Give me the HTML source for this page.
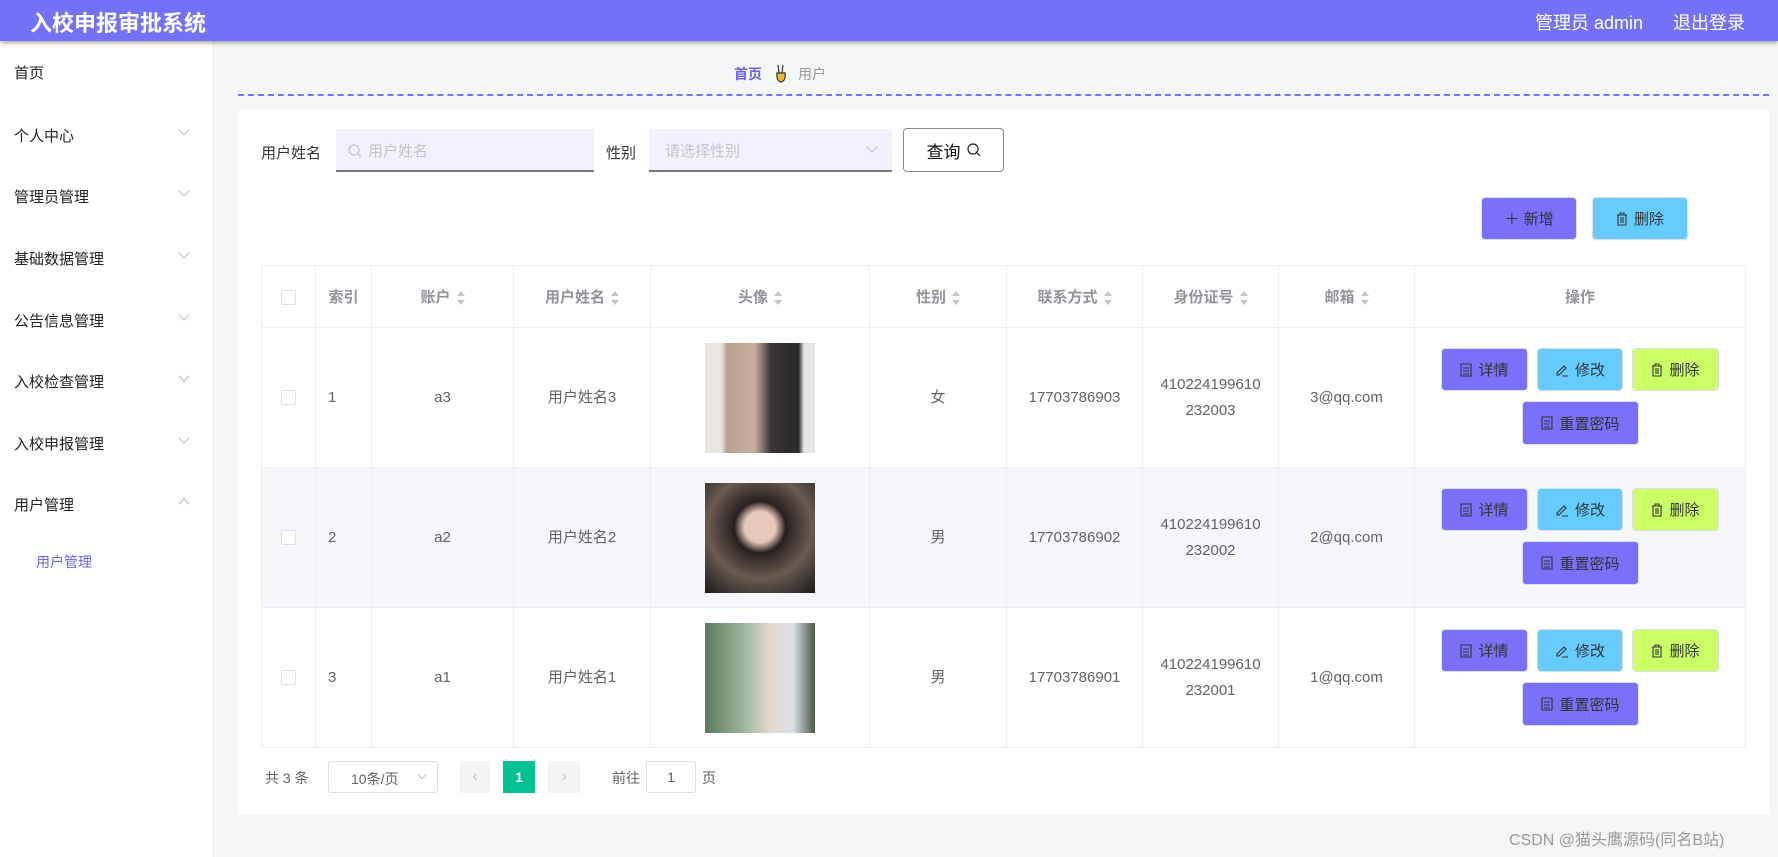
<!DOCTYPE html>
<html><head><meta charset="utf-8">
<style>
*{box-sizing:border-box;margin:0;padding:0}
body{width:1778px;height:857px;overflow:hidden;background:#f5f6f8;font-family:"Liberation Sans","Noto Sans CJK SC",sans-serif;position:relative;color:#333}
.abs{position:absolute}
.hdr{left:0;top:0;width:1778px;height:41px;background:#7471f9;box-shadow:0 2px 4px rgba(0,0,0,.35);z-index:2}
.side{left:0;top:41px;width:212px;height:816px;background:#fff}
.mi{position:absolute;left:14px;font-size:15px;color:#222}
.arr{position:absolute;left:180px;width:8px;height:8px;border-right:1px solid #bbb;border-bottom:1px solid #bbb;transform:rotate(45deg)}
.panel{left:238px;top:110px;width:1531px;height:704px;background:#fff}
.inp{background:#f3f1ff;border-bottom:2px solid #777;height:43px}
.btn{position:absolute;border-radius:4px;font-size:15px;display:flex;align-items:center;justify-content:center;gap:6px;color:#333;border:1px solid #dcdfe6}
.p{background:#7a70fa}.b{background:#66ccff}.g{background:#ccff66}
table{border-collapse:collapse;position:absolute;left:261px;top:265px;width:1484px;table-layout:fixed;font-size:15px;color:#606266}
td,th{border:1px solid #ebeef5;text-align:center}
th{height:62px;color:#909399;font-weight:bold}
td{height:140px;line-height:26px}
tr.alt td{background:#f5f7fa}
.s{display:inline-block;vertical-align:middle;margin-left:6px;width:8px;height:14px;position:relative}
.s:before,.s:after{content:"";position:absolute;left:0;border-left:4px solid transparent;border-right:4px solid transparent}
.s:before{top:0;border-bottom:5px solid #c0c4cc}.s:after{bottom:0;border-top:5px solid #c0c4cc}
.cb{display:inline-block;width:15px;height:15px;border:1px solid #dcdfe6;border-radius:2px;background:#fff;vertical-align:middle}
.img{width:110px;height:110px;margin:0 auto}
.pg{font-size:14px;color:#606266}
svg{display:block}
</style></head><body>
<div class="abs hdr">
<div class="abs" style="left:30px;top:6px;font-size:22px;font-weight:bold;color:#fff">入校申报审批系统</div>
<div class="abs" style="left:1535px;top:9px;font-size:18px;color:#fff">管理员 admin</div>
<div class="abs" style="left:1673px;top:9px;font-size:18px;color:#fff">退出登录</div>
</div>
<div class="abs side">
<div class="mi" style="top:21px">首页</div>
<div class="mi" style="top:84px">个人中心</div><div class="arr" style="top:85px"></div>
<div class="mi" style="top:145px">管理员管理</div><div class="arr" style="top:146px"></div>
<div class="mi" style="top:207px">基础数据管理</div><div class="arr" style="top:208px"></div>
<div class="mi" style="top:269px">公告信息管理</div><div class="arr" style="top:270px"></div>
<div class="mi" style="top:330px">入校检查管理</div><div class="arr" style="top:331px"></div>
<div class="mi" style="top:392px">入校申报管理</div><div class="arr" style="top:393px"></div>
<div class="mi" style="top:453px">用户管理</div><div class="arr" style="top:459px;transform:rotate(-135deg)"></div>
<div class="mi" style="top:511px;left:36px;color:#6b63f0;font-size:14px">用户管理</div>
</div>
<div class="abs" style="left:734px;top:64px;font-size:14px;color:#6b63f0;font-weight:bold">首页</div>
<div class="abs" style="left:774px;top:63px"><svg width="14" height="20" viewBox="0 0 14 20"><path d="M4 2 L5 10 M9 2 L8 10 M3 10 Q2 18 7 19 Q12 18 11 10 Z" fill="#f5b82e" stroke="#333" stroke-width="1.2"/></svg></div>
<div class="abs" style="left:798px;top:64px;font-size:14px;color:#999">用户</div>
<div class="abs" style="left:238px;top:94px;width:1531px;border-top:2px dashed #7471f9"></div>
<div class="abs panel"></div>
<div class="abs" style="left:261px;top:142px;font-size:15px">用户姓名</div>
<div class="abs inp" style="left:336px;top:129px;width:258px"><svg style="position:absolute;left:12px;top:15px" width="14" height="14" viewBox="0 0 14 14"><circle cx="6" cy="6" r="5" fill="none" stroke="#c0c4cc" stroke-width="1.3"/><path d="M10 10 L13 13" stroke="#c0c4cc" stroke-width="1.3"/></svg><span style="position:absolute;left:32px;top:11px;color:#c0c4cc;font-size:15px">用户姓名</span></div>
<div class="abs" style="left:606px;top:142px;font-size:15px">性别</div>
<div class="abs inp" style="left:649px;top:129px;width:243px"><span style="position:absolute;left:16px;top:11px;color:#c0c4cc;font-size:15px">请选择性别</span><span style="position:absolute;right:16px;top:14px;width:8px;height:8px;border-right:1px solid #bbb;border-bottom:1px solid #bbb;transform:rotate(45deg)"></span></div>
<div class="btn" style="left:903px;top:128px;width:101px;height:44px;border:1px solid #888;font-size:17px;color:#111;background:#fff">查询 <svg width="14" height="14" viewBox="0 0 14 14"><circle cx="6" cy="6" r="5" fill="none" stroke="#222" stroke-width="1.2"/><path d="M10 10 L13 13" stroke="#222" stroke-width="1.2"/></svg></div>
<div class="btn p" style="left:1481px;top:197px;width:96px;height:43px">＋ 新增</div>
<div class="btn b" style="left:1592px;top:197px;width:96px;height:43px"><svg width="12" height="14" viewBox="0 0 12 14"><path d="M1 3 H11 M4 3 V1 H8 V3 M2 3 V13 H10 V3 M5 5 V11 M7 5 V11" fill="none" stroke="#333" stroke-width="1.1"/></svg>删除</div>
<table>
<colgroup><col style="width:54px"><col style="width:56px"><col style="width:142px"><col style="width:137px"><col style="width:219px"><col style="width:137px"><col style="width:136px"><col style="width:136px"><col style="width:136px"><col style="width:331px"></colgroup>
<tr><th><span class="cb"></span></th><th>索引</th><th>账户<span class="s"></span></th><th>用户姓名<span class="s"></span></th><th>头像<span class="s"></span></th><th>性别<span class="s"></span></th><th>联系方式<span class="s"></span></th><th>身份证号<span class="s"></span></th><th>邮箱<span class="s"></span></th><th>操作</th></tr>
<tr><td><span class="cb"></span></td><td style="text-align:left;padding-left:12px">1</td><td>a3</td><td>用户姓名3</td><td><div class="img" style="background:linear-gradient(90deg,#e8e4e0 15%,#b8a090 20%,#c8b0a0 45%,#3a3535 60%,#2a2828 85%,#e5e5e5 90%)"></div></td><td>女</td><td>17703786903</td><td>410224199610<br>232003</td><td>3@qq.com</td><td></td></tr>
<tr class="alt"><td><span class="cb"></span></td><td style="text-align:left;padding-left:12px">2</td><td>a2</td><td>用户姓名2</td><td><div class="img" style="background:radial-gradient(circle at 50% 40%,#e8c8b8 18%,#2a2020 30%,#6a5a50 60%,#1a1a1a)"></div></td><td>男</td><td>17703786902</td><td>410224199610<br>232002</td><td>2@qq.com</td><td></td></tr>
<tr><td><span class="cb"></span></td><td style="text-align:left;padding-left:12px">3</td><td>a1</td><td>用户姓名1</td><td><div class="img" style="background:linear-gradient(90deg,#5a7a5a,#a8c0a8 40%,#e8d8d0 60%,#d8e0e8 80%,#4a5a48)"></div></td><td>男</td><td>17703786901</td><td>410224199610<br>232001</td><td>1@qq.com</td><td></td></tr>
</table>
<div class="btn p" style="left:1441px;top:348px;width:87px;height:43px"><svg width="12" height="14" viewBox="0 0 12 14"><path d="M1 1 H11 V13 H1 Z M3 5 H9 M3 8 H9 M3 11 H9" fill="none" stroke="#333" stroke-width="1.1"/></svg>详情</div>
<div class="btn b" style="left:1537px;top:348px;width:86px;height:43px"><svg width="14" height="14" viewBox="0 0 14 14"><path d="M2 10 L9 3 L11 5 L4 12 L2 12 Z M7 13 H13" fill="none" stroke="#333" stroke-width="1.1"/></svg>修改</div>
<div class="btn g" style="left:1632px;top:348px;width:87px;height:43px"><svg width="12" height="14" viewBox="0 0 12 14"><path d="M1 3 H11 M4 3 V1 H8 V3 M2 3 V13 H10 V3 M5 5 V11 M7 5 V11" fill="none" stroke="#333" stroke-width="1.1"/></svg>删除</div>
<div class="btn p" style="left:1522px;top:401px;width:117px;height:44px"><svg width="12" height="14" viewBox="0 0 12 14"><path d="M1 1 H11 V13 H1 Z M3 5 H9 M3 8 H9 M3 11 H9" fill="none" stroke="#333" stroke-width="1.1"/></svg>重置密码</div>
<div class="btn p" style="left:1441px;top:488px;width:87px;height:43px"><svg width="12" height="14" viewBox="0 0 12 14"><path d="M1 1 H11 V13 H1 Z M3 5 H9 M3 8 H9 M3 11 H9" fill="none" stroke="#333" stroke-width="1.1"/></svg>详情</div>
<div class="btn b" style="left:1537px;top:488px;width:86px;height:43px"><svg width="14" height="14" viewBox="0 0 14 14"><path d="M2 10 L9 3 L11 5 L4 12 L2 12 Z M7 13 H13" fill="none" stroke="#333" stroke-width="1.1"/></svg>修改</div>
<div class="btn g" style="left:1632px;top:488px;width:87px;height:43px"><svg width="12" height="14" viewBox="0 0 12 14"><path d="M1 3 H11 M4 3 V1 H8 V3 M2 3 V13 H10 V3 M5 5 V11 M7 5 V11" fill="none" stroke="#333" stroke-width="1.1"/></svg>删除</div>
<div class="btn p" style="left:1522px;top:541px;width:117px;height:44px"><svg width="12" height="14" viewBox="0 0 12 14"><path d="M1 1 H11 V13 H1 Z M3 5 H9 M3 8 H9 M3 11 H9" fill="none" stroke="#333" stroke-width="1.1"/></svg>重置密码</div>
<div class="btn p" style="left:1441px;top:629px;width:87px;height:43px"><svg width="12" height="14" viewBox="0 0 12 14"><path d="M1 1 H11 V13 H1 Z M3 5 H9 M3 8 H9 M3 11 H9" fill="none" stroke="#333" stroke-width="1.1"/></svg>详情</div>
<div class="btn b" style="left:1537px;top:629px;width:86px;height:43px"><svg width="14" height="14" viewBox="0 0 14 14"><path d="M2 10 L9 3 L11 5 L4 12 L2 12 Z M7 13 H13" fill="none" stroke="#333" stroke-width="1.1"/></svg>修改</div>
<div class="btn g" style="left:1632px;top:629px;width:87px;height:43px"><svg width="12" height="14" viewBox="0 0 12 14"><path d="M1 3 H11 M4 3 V1 H8 V3 M2 3 V13 H10 V3 M5 5 V11 M7 5 V11" fill="none" stroke="#333" stroke-width="1.1"/></svg>删除</div>
<div class="btn p" style="left:1522px;top:682px;width:117px;height:44px"><svg width="12" height="14" viewBox="0 0 12 14"><path d="M1 1 H11 V13 H1 Z M3 5 H9 M3 8 H9 M3 11 H9" fill="none" stroke="#333" stroke-width="1.1"/></svg>重置密码</div>
<div class="abs pg" style="left:265px;top:768px">共 3 条</div>
<div class="abs pg" style="left:328px;top:761px;width:110px;height:32px;border:1px solid #dcdfe6;border-radius:3px;padding:7px 0 0 22px">10条/页<span style="position:absolute;right:12px;top:10px;width:6px;height:6px;border-right:1px solid #bbb;border-bottom:1px solid #bbb;transform:rotate(45deg)"></span></div>
<div class="abs" style="left:460px;top:761px;width:30px;height:32px;background:#f4f4f5;color:#c0c4cc;text-align:center;line-height:32px">‹</div>
<div class="abs" style="left:503px;top:761px;width:32px;height:32px;background:#00c292;color:#fff;text-align:center;line-height:32px;font-weight:bold;font-size:14px">1</div>
<div class="abs" style="left:548px;top:761px;width:32px;height:32px;background:#f4f4f5;color:#c0c4cc;text-align:center;line-height:32px">›</div>
<div class="abs pg" style="left:612px;top:768px">前往</div>
<div class="abs pg" style="left:646px;top:761px;width:50px;height:32px;border:1px solid #dcdfe6;border-radius:3px;text-align:center;line-height:30px">1</div>
<div class="abs pg" style="left:702px;top:768px">页</div>
<div class="abs" style="left:1509px;top:826px;font-size:16px;color:#999">CSDN @猫头鹰源码(同名B站)</div>
</body></html>
